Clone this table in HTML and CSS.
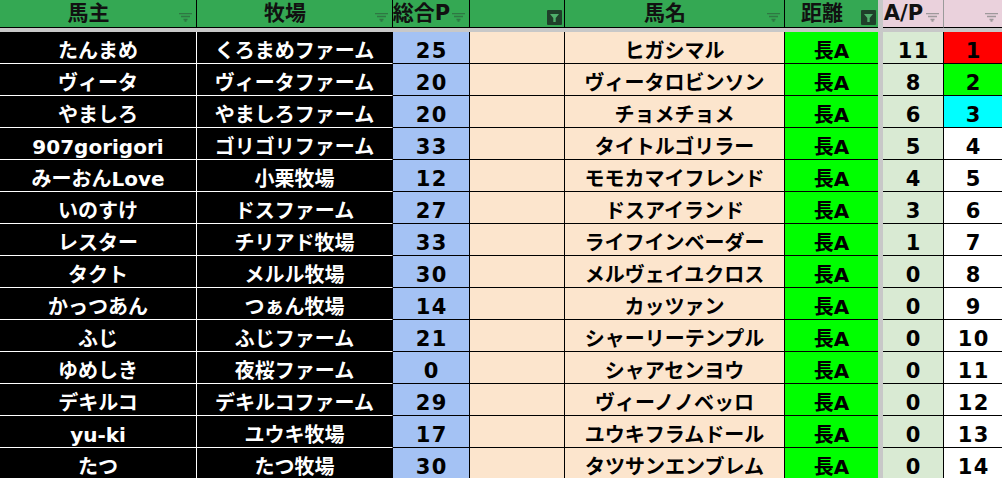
FILE: index.html
```html
<!DOCTYPE html>
<html lang="ja">
<head>
<meta charset="utf-8">
<link rel="stylesheet" href="styles.css">
</head>
<body>
<div class="sheet">
  <div class="row head">
    <div class="c c1 hg">馬主<svg class="flt" width="13" height="9" viewBox="0 0 13 9"><path d="M0 .5h13M2 3.5h9M4.5 6.5h4M5.5 8h2"/></svg></div>
    <div class="c c2 hg">牧場<svg class="flt" width="13" height="9" viewBox="0 0 13 9"><path d="M0 .5h13M2 3.5h9M4.5 6.5h4M5.5 8h2"/></svg></div>
    <div class="c c3 hg">総合P<svg class="flt" width="13" height="9" viewBox="0 0 13 9"><path d="M0 .5h13M2 3.5h9M4.5 6.5h4M5.5 8h2"/></svg></div>
    <div class="c c4 hg"><svg class="fon" width="15" height="15" viewBox="0 0 15 15"><rect width="15" height="15" rx="1"/><path d="M3 4h9l-3.3 4v4h-2.4v-4z"/></svg></div>
    <div class="c c5 hg">馬名<svg class="flt" width="13" height="9" viewBox="0 0 13 9"><path d="M0 .5h13M2 3.5h9M4.5 6.5h4M5.5 8h2"/></svg></div>
    <div class="c c6 hg">距離<svg class="fon" width="15" height="15" viewBox="0 0 15 15"><rect width="15" height="15" rx="1"/><path d="M3 4h9l-3.3 4v4h-2.4v-4z"/></svg></div>
    <div class="gap"></div>
    <div class="c c7 hp">A/P<svg class="flt gray" width="13" height="9" viewBox="0 0 13 9"><path d="M0 .5h13M2 3.5h9M4.5 6.5h4M5.5 8h2"/></svg></div>
    <div class="c c8 hp"><svg class="flt gray" width="13" height="9" viewBox="0 0 13 9"><path d="M0 .5h13M2 3.5h9M4.5 6.5h4M5.5 8h2"/></svg></div>
  </div>
  <div class="band"></div>

  <div class="row"><div class="c c1 dk">たんまめ</div><div class="c c2 dk">くろまめファーム</div><div class="c c3 bl num">25</div><div class="c c4 pc"></div><div class="c c5 pc">ヒガシマル</div><div class="c c6 gr">長A</div><div class="gap"></div><div class="c c7 lg num">11</div><div class="c c8 num rk-red">1</div></div>
  <div class="row"><div class="c c1 dk">ヴィータ</div><div class="c c2 dk">ヴィータファーム</div><div class="c c3 bl num">20</div><div class="c c4 pc"></div><div class="c c5 pc">ヴィータロビンソン</div><div class="c c6 gr">長A</div><div class="gap"></div><div class="c c7 lg num">8</div><div class="c c8 num rk-green">2</div></div>
  <div class="row"><div class="c c1 dk">やましろ</div><div class="c c2 dk">やましろファーム</div><div class="c c3 bl num">20</div><div class="c c4 pc"></div><div class="c c5 pc">チョメチョメ</div><div class="c c6 gr">長A</div><div class="gap"></div><div class="c c7 lg num">6</div><div class="c c8 num rk-cyan">3</div></div>
  <div class="row"><div class="c c1 dk">907gorigori</div><div class="c c2 dk">ゴリゴリファーム</div><div class="c c3 bl num">33</div><div class="c c4 pc"></div><div class="c c5 pc">タイトルゴリラー</div><div class="c c6 gr">長A</div><div class="gap"></div><div class="c c7 lg num">5</div><div class="c c8 num">4</div></div>
  <div class="row"><div class="c c1 dk">みーおんLove</div><div class="c c2 dk">小栗牧場</div><div class="c c3 bl num">12</div><div class="c c4 pc"></div><div class="c c5 pc">モモカマイフレンド</div><div class="c c6 gr">長A</div><div class="gap"></div><div class="c c7 lg num">4</div><div class="c c8 num">5</div></div>
  <div class="row"><div class="c c1 dk">いのすけ</div><div class="c c2 dk">ドスファーム</div><div class="c c3 bl num">27</div><div class="c c4 pc"></div><div class="c c5 pc">ドスアイランド</div><div class="c c6 gr">長A</div><div class="gap"></div><div class="c c7 lg num">3</div><div class="c c8 num">6</div></div>
  <div class="row"><div class="c c1 dk">レスター</div><div class="c c2 dk">チリアド牧場</div><div class="c c3 bl num">33</div><div class="c c4 pc"></div><div class="c c5 pc">ライフインベーダー</div><div class="c c6 gr">長A</div><div class="gap"></div><div class="c c7 lg num">1</div><div class="c c8 num">7</div></div>
  <div class="row"><div class="c c1 dk">タクト</div><div class="c c2 dk">メルル牧場</div><div class="c c3 bl num">30</div><div class="c c4 pc"></div><div class="c c5 pc">メルヴェイユクロス</div><div class="c c6 gr">長A</div><div class="gap"></div><div class="c c7 lg num">0</div><div class="c c8 num">8</div></div>
  <div class="row"><div class="c c1 dk">かっつあん</div><div class="c c2 dk">つぁん牧場</div><div class="c c3 bl num">14</div><div class="c c4 pc"></div><div class="c c5 pc">カッツァン</div><div class="c c6 gr">長A</div><div class="gap"></div><div class="c c7 lg num">0</div><div class="c c8 num">9</div></div>
  <div class="row"><div class="c c1 dk">ふじ</div><div class="c c2 dk">ふじファーム</div><div class="c c3 bl num">21</div><div class="c c4 pc"></div><div class="c c5 pc">シャーリーテンプル</div><div class="c c6 gr">長A</div><div class="gap"></div><div class="c c7 lg num">0</div><div class="c c8 num">10</div></div>
  <div class="row"><div class="c c1 dk">ゆめしき</div><div class="c c2 dk">夜桜ファーム</div><div class="c c3 bl num">0</div><div class="c c4 pc"></div><div class="c c5 pc">シャアセンヨウ</div><div class="c c6 gr">長A</div><div class="gap"></div><div class="c c7 lg num">0</div><div class="c c8 num">11</div></div>
  <div class="row"><div class="c c1 dk">デキルコ</div><div class="c c2 dk">デキルコファーム</div><div class="c c3 bl num">29</div><div class="c c4 pc"></div><div class="c c5 pc">ヴィーノノベッロ</div><div class="c c6 gr">長A</div><div class="gap"></div><div class="c c7 lg num">0</div><div class="c c8 num">12</div></div>
  <div class="row"><div class="c c1 dk">yu-ki</div><div class="c c2 dk">ユウキ牧場</div><div class="c c3 bl num">17</div><div class="c c4 pc"></div><div class="c c5 pc">ユウキフラムドール</div><div class="c c6 gr">長A</div><div class="gap"></div><div class="c c7 lg num">0</div><div class="c c8 num">13</div></div>
  <div class="row"><div class="c c1 dk">たつ</div><div class="c c2 dk">たつ牧場</div><div class="c c3 bl num">30</div><div class="c c4 pc"></div><div class="c c5 pc">タツサンエンブレム</div><div class="c c6 gr">長A</div><div class="gap"></div><div class="c c7 lg num">0</div><div class="c c8 num">14</div></div>
</div>
</body>
</html>
```

FILE: styles.css
```css
html, body {
  margin: 0;
  padding: 0;
  background: #ffffff;
  overflow: hidden;
}

.sheet {
  width: 1002px;
  font-family: "DejaVu Sans", "Noto Sans CJK JP", sans-serif;
  font-weight: bold;
  color: #000;
}

.row {
  display: flex;
  height: 32px;
}

.row.head {
  height: 28px;
}

.c {
  box-sizing: border-box;
  height: 100%;
  display: flex;
  align-items: center;
  justify-content: center;
  border-right: 1px solid #000;
  border-bottom: 1px solid #000;
  font-size: 20px;
  line-height: 24px;
  padding-top: 7px;
  white-space: nowrap;
  overflow: hidden;
}

.num {
  font-size: 21px;
  letter-spacing: 1.5px;
  text-indent: 1.5px;
}

.c1 { width: 197px; }
.c2 { width: 196px; }
.c3 { width: 77px; }
.c4 { width: 95px; }
.c5 { width: 220px; }
.c6 { width: 93px; border-right: none; }
.c7 { width: 61px; }
.c8 { flex: 1; border-right: none; }

.gap {
  width: 5px;
  background: #c8c8c8;
}

.band {
  height: 4px;
  background: #c8c8c8;
}

/* header */
.head .c {
  position: relative;
  font-size: 21px;
  line-height: 27px;
  padding-top: 0;
  padding-right: 19px;
  color: #111;
}

.hg { background: #34a853; }
.hp { background: #ead1dc; }
.head .c7 { border-right-color: #9a9a9a; }

.flt {
  position: absolute;
  right: 4px;
  top: 13px;
  fill: none;
  stroke: #2e6b40;
  stroke-width: 1.3;
  opacity: 0.8;
}

.flt.gray {
  stroke: #8c8c8c;
}

.fon {
  position: absolute;
  right: 2px;
  top: 10px;
}

.fon rect { fill: #1f3f2a; }
.fon path { fill: #4fae6b; }

/* body cells */
.dk {
  background: #000;
  color: #fff;
  border-bottom-color: #fff;
}
.c1.dk { border-right-color: #fff; }

.bl { background: #a4c2f4; }
.pc { background: #fce5cd; }
.gr { background: #00ff00; }
.lg { background: #d9ead3; }
.rk-red { background: #ff0000; }
.rk-green { background: #00ff00; }
.rk-cyan { background: #00ffff; }
```
